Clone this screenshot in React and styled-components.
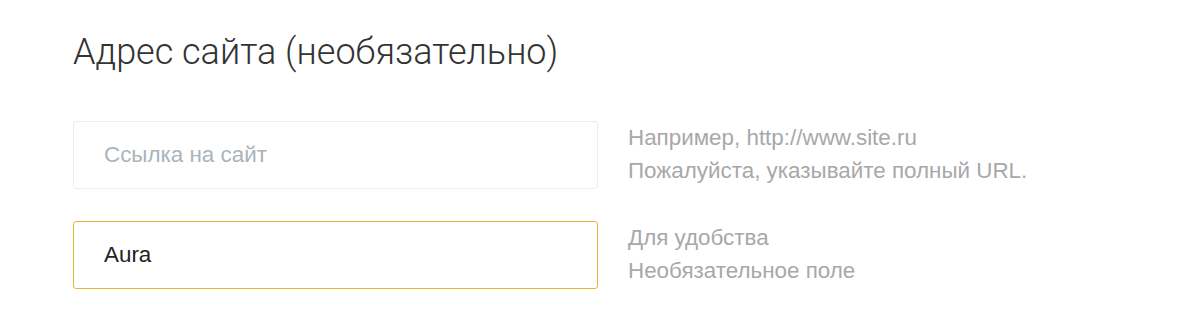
import React from "react";
import styled, { createGlobalStyle } from "styled-components";

const GlobalStyle = createGlobalStyle`
  body {
    margin: 0;
    background: #fff;
    font-family: "Liberation Sans", Arial, sans-serif;
  }
`;

const Section = styled.div`
  padding: 26px 0 0 73px;
`;

const Title = styled.h2`
  margin: 0 0 43px 0;
  font-family: Roboto, "Noto Sans", sans-serif;
  font-weight: 300;
  font-size: 36px;
  line-height: 52px;
  color: #333;
`;

const Row = styled.div`
  display: grid;
  grid-template-columns: 525px 1fr;
  column-gap: 30px;
  align-items: start;
  margin-bottom: 32px;
`;

const Input = styled.input`
  box-sizing: border-box;
  width: 100%;
  height: 68px;
  padding: 0 30px;
  border: 1px solid ${(props) => (props.active ? "#e8b43c" : "#ececec")};
  border-radius: 3px;
  background: #fff;
  font-family: "Liberation Sans", Arial, sans-serif;
  font-size: 22.4px;
  color: #222;
  outline: none;

  &::placeholder {
    color: #aab4bb;
  }
`;

const Hint = styled.div`
  font-size: 22.4px;
  line-height: 33px;
  color: #a8a8a8;
`;

const App = () => {
  return (
    <>
      <GlobalStyle />
      <Section>
        <Title>Адрес сайта (необязательно)</Title>
        <Row>
          <Input placeholder="Ссылка на сайт" />
          <Hint>
            Например, http://www.site.ru
            <br />
            Пожалуйста, указывайте полный URL.
          </Hint>
        </Row>
        <Row>
          <Input active defaultValue="Aura" />
          <Hint>
            Для удобства
            <br />
            Необязательное поле
          </Hint>
        </Row>
      </Section>
    </>
  );
};

export default App;
